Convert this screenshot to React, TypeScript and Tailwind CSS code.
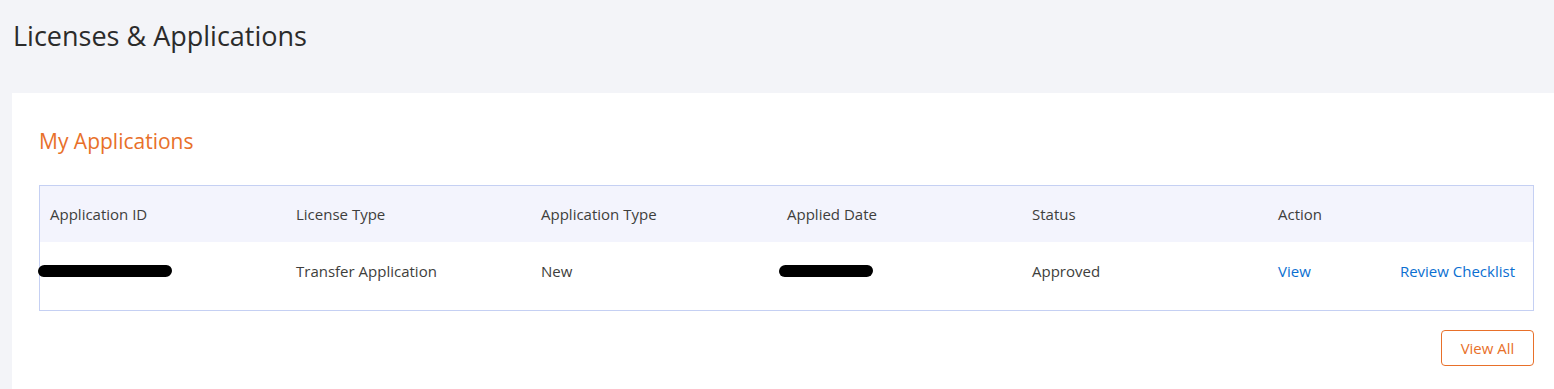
import React from 'react';

const COLS = ['Application ID', 'License Type', 'Application Type', 'Applied Date', 'Status', 'Action'];

function Redacted({ w }: { w: number }) {
  return (
    <span
      className="inline-block h-[12px] bg-black rounded-[6px] -skew-x-3"
      style={{ width: w }}
    />
  );
}

export default function App() {
  return (
    <div className="min-h-screen bg-[#f3f4f8] pl-[12px] text-[#3e3e3c] font-['Open_Sans',sans-serif]">
      <h1 className="h-[93px] pl-[1px] pt-[18px] text-[27px] leading-[36px] text-[#2b2b2b]">
        Licenses &amp; Applications
      </h1>

      <div className="bg-white pl-[27px] pr-[20px] pt-[28px] pb-[24px]">
        <h2 className="text-[21px] leading-[40px] text-[#e8702a]">My Applications</h2>

        <div className="mt-[24px] border border-[#c5d0f3]">
          <div className="grid grid-cols-[246px_245px_246px_245px_246px_1fr] h-[56px] items-center bg-[#f3f4fd] text-[15px]">
            {COLS.map(c => (
              <div key={c} className="pl-[10px]">{c}</div>
            ))}
          </div>
          <div className="grid grid-cols-[246px_245px_246px_245px_246px_1fr] h-[68px] pb-[10px] items-center text-[15px]">
            <div className="-ml-[2px]"><Redacted w={134} /></div>
            <div className="pl-[10px]">Transfer Application</div>
            <div className="pl-[10px]">New</div>
            <div className="pl-[2px]"><Redacted w={94} /></div>
            <div className="pl-[10px]">Approved</div>
            <div className="pl-[10px] pr-[18px] flex justify-between text-[#0b6fd1]">
              <a href="#">View</a>
              <a href="#">Review Checklist</a>
            </div>
          </div>
        </div>

        <div className="flex justify-end mt-[19px]">
          <button className="h-[36px] w-[93px] border border-[#e8702a] rounded-[4px] text-[15px] text-[#e8702a]">
            View All
          </button>
        </div>
      </div>
    </div>
  );
}
